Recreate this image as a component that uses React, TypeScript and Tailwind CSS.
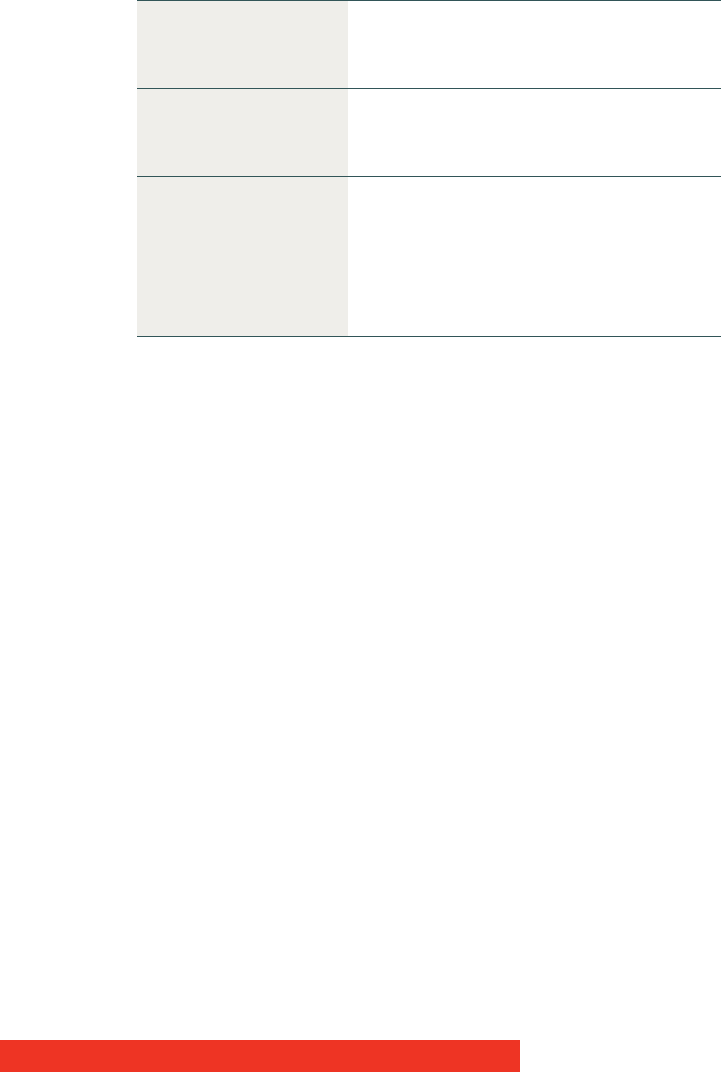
export default function App() {
  const rows = [87, 87, 159];
  return (
    <div className="w-[721px] h-[1072px] bg-white flex flex-col font-['Liberation_Sans',sans-serif]">
      <div className="pl-[137px]">
        <div className="border-b border-[#325558]">
          {rows.map((h, i) => (
            <div key={i} className="flex border-t border-[#325558]">
              <div className="w-[211px] bg-[#efeeea]" style={{ height: h }} />
              <div className="flex-1 bg-white" />
            </div>
          ))}
        </div>
      </div>
      <div className="flex-1" />
      <div className="h-[32px] w-[520px] bg-[#ee3424]" />
    </div>
  );
}
